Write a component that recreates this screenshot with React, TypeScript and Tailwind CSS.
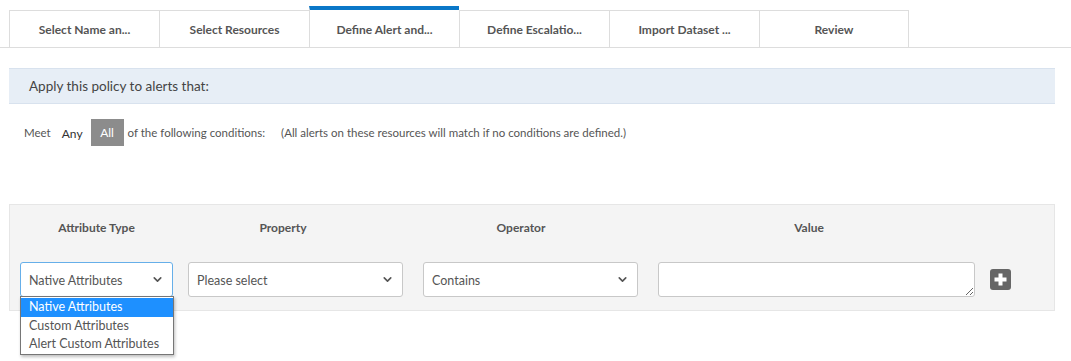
import React from 'react';
import { ChevronDown } from 'lucide-react';

const tabs = [
  'Select Name an...',
  'Select Resources',
  'Define Alert and...',
  'Define Escalatio...',
  'Import Dataset ...',
  'Review',
];

const Select = ({ value, width, focused }: { value: string; width: string; focused?: boolean }) => (
  <div
    className={`${width} h-[35px] bg-white rounded-[3px] border flex items-center justify-between pl-[8px] pr-[8px] text-[12.5px] text-[#555] ${
      focused ? 'border-[#66afe9]' : 'border-[#c8c8c8]'
    }`}
  >
    <span className="pt-[3px]">{value}</span>
    <ChevronDown size={13} strokeWidth={3} className="text-[#555]" />
  </div>
);

export default function App() {
  return (
    <div className="w-[1071px] h-[361px] bg-white overflow-hidden font-['Lato',sans-serif] text-[#555]">
      {/* wizard tabs */}
      <div className="pt-[6px] pl-[9px] border-b border-[#dddddd] flex items-end">
        {tabs.map((t, i) => (
          <div
            key={t}
            className={`w-[150px] flex items-center justify-center pt-[2px] text-[12px] font-bold text-[#555] border-l border-[#dddddd] ${
              i === 2 ? 'h-[41px] border-t-4 border-t-[#0a77c8] bg-white' : 'h-[37px] border-t'
            } ${i === tabs.length - 1 ? 'border-r' : ''}`}
          >
            {t}
          </div>
        ))}
      </div>

      <div className="pl-[9px] pr-[16px] pt-[20px]">
        <div className="h-[36px] bg-[#e7eef6] border-y border-[#d8e2ee] flex items-center pl-[20px] text-[13.5px] text-[#444]">
          Apply this policy to alerts that:
        </div>

        <div className="flex items-center h-[27px] mt-[15px] pl-[15px] text-[11.5px]">
          <span className="text-[#555]">Meet</span>
          <span className="ml-[11px] text-[12px] text-[#333] mt-[3px]">Any</span>
          <span className="ml-[8px] w-[33px] h-[27px] bg-[#8c8c8c] text-white text-[12px] flex items-center justify-center">
            All
          </span>
          <span className="ml-[4px] text-[#555]">of the following conditions:</span>
          <span className="ml-[16px] text-[#555]">(All alerts on these resources will match if no conditions are defined.)</span>
        </div>

        <div className="mt-[58px] h-[107px] bg-[#f4f4f4] border border-[#e6e6e6] relative">
          <div className="flex pl-[10px] pt-[14px] text-[12px] font-bold text-[#555] h-[45px]">
            <div className="w-[153px] text-center">Attribute Type</div>
            <div className="w-[220px] text-center">Property</div>
            <div className="w-[256px] text-center">Operator</div>
            <div className="w-[320px] text-center">Value</div>
          </div>
          <div className="flex items-center pl-[10px] mt-[12px]">
            <Select value="Native Attributes" width="w-[153px]" focused />
            <div className="ml-[15px]">
              <Select value="Please select" width="w-[215px]" />
            </div>
            <div className="ml-[20px]">
              <Select value="Contains" width="w-[215px]" />
            </div>
            <textarea
              className="ml-[20px] w-[317px] h-[35px] bg-white rounded-[3px] border border-[#c8c8c8] outline-none"
              readOnly
            />
            <div className="ml-[15px] w-[21px] h-[21px] rounded-[3px] bg-[#666] flex items-center justify-center">
              <svg width="13" height="13" viewBox="0 0 13 13">
                <rect x="4.5" y="0.5" width="4" height="12" fill="white" />
                <rect x="0.5" y="4.5" width="12" height="4" fill="white" />
              </svg>
            </div>
          </div>

          {/* open dropdown */}
          <div className="absolute left-[10px] top-[91px] w-[154px] bg-white border border-[#767676] shadow-[1px_2px_3px_rgba(0,0,0,0.25)] text-[12.5px] text-[#555] py-[1px]">
            <div className="h-[19px] bg-[#1e90ff] text-white pl-[8px] flex items-center">Native Attributes</div>
            <div className="h-[18px] pl-[8px] flex items-center">Custom Attributes</div>
            <div className="h-[18px] pl-[8px] flex items-center">Alert Custom Attributes</div>
          </div>
        </div>
      </div>
    </div>
  );
}
